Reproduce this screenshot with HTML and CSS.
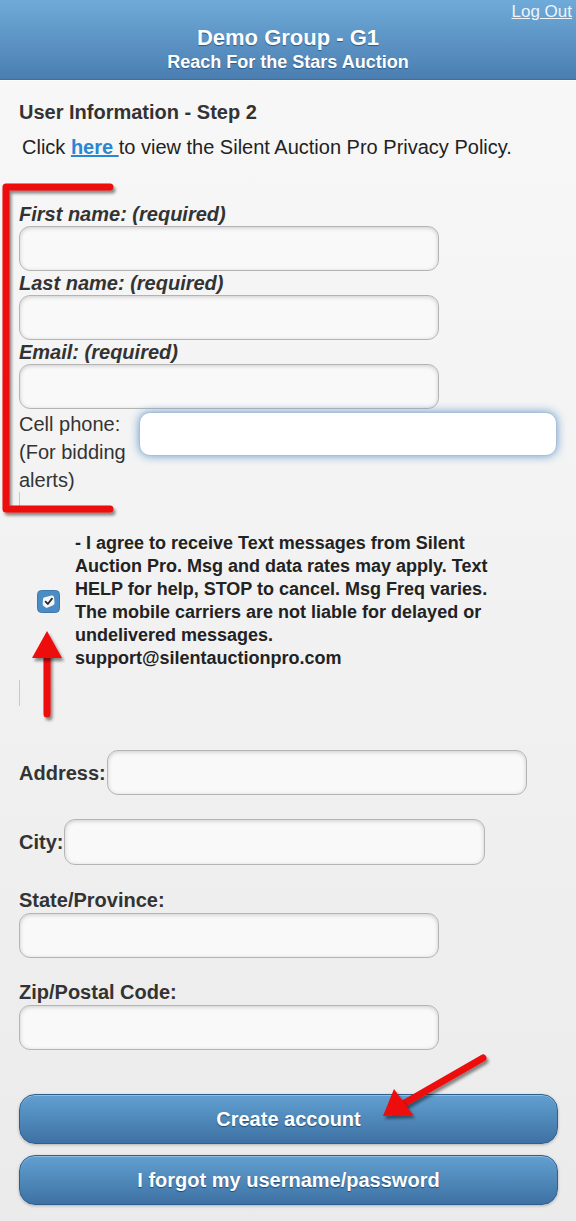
FILE: index.html
```html
<!DOCTYPE html>
<html>
<head>
  <meta charset="utf-8">
  <title>User Information - Step 2</title>
  <link rel="stylesheet" href="styles.css">
</head>

<body>
  <div class="page">
    <header class="top-bar">
      <a class="logout" href="#">Log Out</a>
      <h1>Demo Group - G1</h1>
      <h2>Reach For the Stars Auction</h2>
    </header>

    <main class="content">
      <h3 class="step-title">User Information - Step 2</h3>
      <p class="policy">Click <a href="#">here </a>to view the Silent Auction Pro Privacy Policy.</p>

      <form>
        <div class="field">
          <label for="first" class="req">First name: (required)</label>
          <input id="first" type="text">
        </div>
        <div class="field">
          <label for="last" class="req">Last name: (required)</label>
          <input id="last" type="text">
        </div>
        <div class="field">
          <label for="email" class="req">Email: (required)</label>
          <input id="email" type="email">
        </div>

        <div class="phone-row">
          <label for="cell">Cell phone: (For bidding alerts)</label>
          <input id="cell" type="tel" class="focused">
        </div>
        <div class="stub stub-top"></div>

        <div class="agree">
          <span class="check-icon">
            <svg width="23" height="23" viewBox="0 0 23 23">
              <rect x="0.5" y="0.5" width="22" height="22" rx="4" fill="#4b8cc4" stroke="#3f78ad"/>
              <path d="M7 7.5 L14.5 5.5 Q16.5 5 17 7 L17.5 13 Q17.6 14.6 16.2 15.3 L9.5 18 L6.5 16 Q5.5 15 5.7 13.5 L6 9 Q6.2 7.8 7 7.5 Z" fill="#f4f6f8"/>
              <path d="M8.6 11.6 L10.8 14 L15 8.6" fill="none" stroke="#2a2a2a" stroke-width="1.8" stroke-linecap="round" stroke-linejoin="round"/>
            </svg>
          </span>
          <label class="agree-text">- I agree to receive Text messages from Silent<br>Auction Pro. Msg and data rates may apply. Text<br>HELP for help, STOP to cancel. Msg Freq varies.<br>The mobile carriers are not liable for delayed or<br>undelivered messages.<br>support@silentauctionpro.com</label>
        </div>
        <div class="stub stub-bottom"></div>

        <div class="inline-field address">
          <label for="address">Address:</label>
          <input id="address" type="text">
        </div>
        <div class="inline-field city">
          <label for="city">City:</label>
          <input id="city" type="text">
        </div>
        <div class="field plain state">
          <label for="state">State/Province:</label>
          <input id="state" type="text">
        </div>
        <div class="field plain zip">
          <label for="zip">Zip/Postal Code:</label>
          <input id="zip" type="text">
        </div>

        <button type="button" class="btn create">Create account</button>
        <button type="button" class="btn forgot">I forgot my username/password</button>
      </form>
    </main>

    <!-- red markup drawn over the screenshot -->
    <svg class="marks" width="576" height="1221" viewBox="0 0 576 1221">
      <defs>
        <filter id="shade" x="-10%" y="-10%" width="130%" height="130%">
          <feDropShadow dx="2" dy="3" stdDeviation="1.5" flood-color="#000" flood-opacity="0.45"/>
        </filter>
      </defs>
      <g filter="url(#shade)" fill="none" stroke="#ee0a0a" stroke-width="7" stroke-linecap="round" stroke-linejoin="round">
        <path d="M110 187 L6 187 L6 509 L110 509"/>
        <path d="M47 714 L47 652"/>
        <path d="M483 1058 L403 1104"/>
      </g>
      <g filter="url(#shade)" fill="#ee0a0a">
        <path d="M47 631 L62 658 L32 658 Z"/>
        <path d="M383 1116 L394 1089 L413 1115 Z"/>
      </g>
    </svg>
  </div>
</body>

</html>
```

FILE: styles.css
```css
body {
  margin: 0;
  font-family: "Liberation Sans", Arial, sans-serif;
  color: #333;
}

.page {
  position: relative;
  width: 576px;
  height: 1221px;
  overflow: hidden;
  background: linear-gradient(#f8f8f8, #ebebeb);
}

.top-bar {
  position: relative;
  height: 80px;
  box-sizing: border-box;
  padding-top: 25px;
  text-align: center;
  color: #fff;
  background: linear-gradient(#6fabd9, #4a7eb1);
  border-bottom: 1px solid #3f6f9d;
  box-shadow: 0 1px 0 #fdfdfd;
  text-shadow: 0 1px 1px #2d5a85;
}

.top-bar h1 {
  margin: 0;
  font-size: 22px;
  line-height: 26px;
  font-weight: bold;
}

.top-bar h2 {
  margin: 0;
  font-size: 18px;
  line-height: 22px;
  font-weight: bold;
}

.logout {
  position: absolute;
  top: 2px;
  right: 4px;
  font-size: 17px;
  line-height: 20px;
  color: #eef4fa;
  text-shadow: none;
}

.content {
  padding: 20px 18px 0 19px;
}

.step-title {
  margin: 0;
  font-size: 20px;
  line-height: 24px;
  font-weight: bold;
  color: #333;
}

.policy {
  margin: 11px 0 0 3px;
  font-size: 20px;
  line-height: 24px;
  color: #222;
}

.policy a {
  color: #2b86d2;
  font-weight: bold;
}

form {
  margin-top: 43px;
}

label {
  display: block;
  font-size: 20px;
  line-height: 24px;
  font-weight: bold;
  color: #333;
}

label.req {
  font-style: italic;
}

input {
  display: block;
  box-sizing: border-box;
  width: 420px;
  height: 45px;
  margin: 0;
  padding: 4px 10px;
  font-family: inherit;
  font-size: 18px;
  background: #f9f9f9;
  border: 1px solid #b4b4b4;
  border-radius: 11px;
  box-shadow: inset 0 1px 4px rgba(0, 0, 0, 0.18);
}

.phone-row {
  display: flex;
  align-items: flex-start;
  margin-top: 1px;
}

.phone-row label {
  width: 120px;
  flex: none;
  font-weight: normal;
  line-height: 28px;
}

.phone-row input {
  width: 418px;
  height: 44px;
  margin-top: 2px;
  background: #fff;
  border-color: #a9bfd6;
  box-shadow: 0 0 10px #6a9ed0;
}

.stub {
  width: 0;
  border-left: 1px solid #c8c8c8;
}

.stub-top {
  height: 18px;
  margin-top: -2px;
}

.agree {
  display: flex;
  align-items: center;
  margin-top: 22px;
  padding-left: 18px;
}

.check-icon {
  display: block;
  width: 23px;
  height: 23px;
  flex: none;
}

.check-icon svg {
  display: block;
}

.agree-text {
  margin-left: 15px;
  font-size: 18px;
  line-height: 23px;
  color: #222;
  white-space: nowrap;
}

.stub-bottom {
  height: 26px;
  margin-top: 10px;
}

.inline-field {
  display: flex;
  align-items: center;
}

.inline-field label {
  margin-right: 1px;
}

.address {
  margin-top: 44px;
}

.city {
  margin-top: 24px;
}

.city input {
  width: 421px;
  height: 46px;
}

.state {
  margin-top: 23px;
}

.state label,
.zip label {
  margin-bottom: 1px;
}

.zip {
  margin-top: 22px;
}

.btn {
  display: block;
  box-sizing: border-box;
  width: 539px;
  height: 50px;
  margin: 0;
  font-family: inherit;
  font-size: 20px;
  font-weight: bold;
  color: #fff;
  text-shadow: 0 1px 1px #1f4a72;
  background: linear-gradient(#61a0d1, #3e71a3);
  border: 1px solid #2e5f8d;
  border-radius: 16px;
  box-shadow: inset 0 1px 0 rgba(255, 255, 255, 0.3), 0 1px 3px rgba(0, 0, 0, 0.25);
}

.create {
  margin-top: 44px;
}

.forgot {
  margin-top: 11px;
}

.marks {
  position: absolute;
  top: 0;
  left: 0;
  pointer-events: none;
}
```
